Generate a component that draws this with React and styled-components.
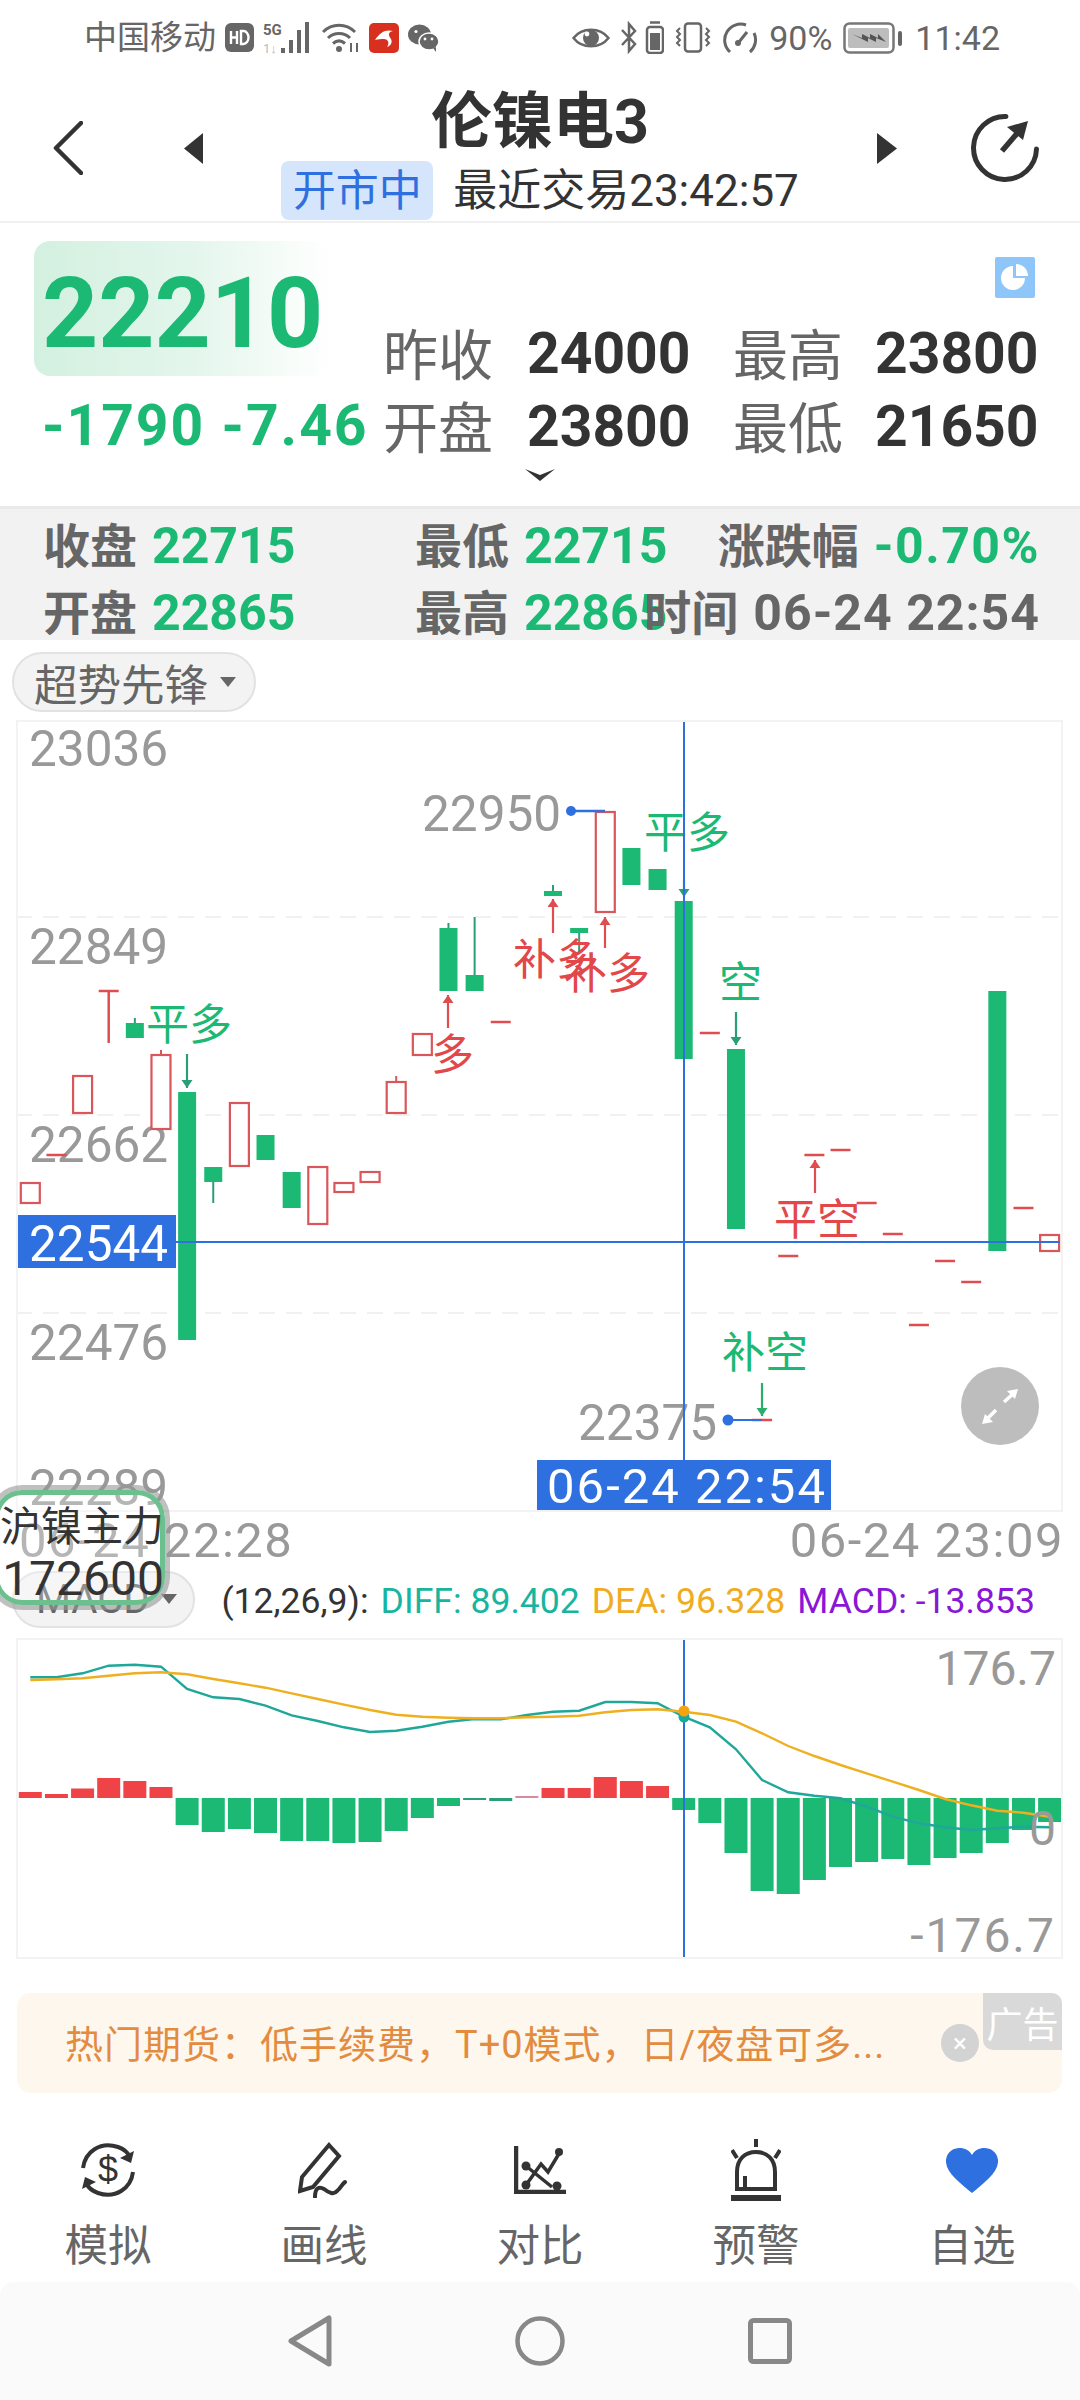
import React from 'react';
import styled, { createGlobalStyle } from 'styled-components';

const FONT = 'Roboto, "Noto Sans CJK SC", sans-serif';
const GREEN = '#1bb973';
const BLUE = '#2f70e0';

const Global = createGlobalStyle`
  html, body { margin: 0; padding: 0; background: #fff; }
  * { box-sizing: border-box; }
  body { font-family: ${FONT}; }
`;

const Page = styled.div`
  position: relative; width: 1080px; height: 2400px; overflow: hidden;
  display: flex; flex-direction: column; background: #fff; color: #333;
`;

const StatusBar = styled.div`
  height: 72px; flex: none; display: flex; justify-content: space-between; align-items: center;
  padding: 3px 80px 0 84px; color: #666;
`;
const StatusGroup = styled.div`display: flex; align-items: center; gap: ${p => p.$gap || 9}px;`;
const StatusText = styled.span`font-size: ${p => p.$size || 33}px; line-height: 40px; color: #666; white-space: nowrap; margin-left: ${p => p.$ml || 0}px;`;

const Header = styled.header`
  height: 151px; flex: none; display: grid; grid-template-columns: 1fr auto 1fr;
  border-bottom: 2px solid #f0f0f0;
`;
const HeaderSide = styled.div`
  display: flex; align-items: center; height: 70px; margin-top: 41px;
  justify-content: ${p => (p.$right ? 'flex-end' : 'flex-start')};
  padding: ${p => (p.$right ? '0 40px 0 0' : '0 0 0 53px')};
  gap: ${p => (p.$right ? 73 : 101)}px;
`;
const TitleCol = styled.div`display: flex; flex-direction: column; align-items: center; padding-top: 20px;`;
const Title = styled.h1`margin: 0; font-size: 61px; line-height: 60px; font-weight: 700; color: #333;`;
const SubRow = styled.div`display: flex; align-items: center; gap: 20px; margin-top: 9px;`;
const MarketTag = styled.span`
  width: 152px; height: 59px; display: flex; align-items: center; justify-content: center;
  background: #d5e5fb; color: ${BLUE}; border-radius: 8px; font-size: 43px; line-height: 50px;
`;
const TradeTime = styled.span`font-size: 44px; line-height: 50px; color: #333; white-space: nowrap;`;

const Quote = styled.section`height: 283px; flex: none; display: flex; flex-direction: column;`;
const QuoteTop = styled.div`display: grid; grid-template-columns: 383px 1fr; height: 239px;`;
const QuoteLeft = styled.div`padding: 18px 0 0 34px;`;
const PriceBox = styled.div`
  width: 296px; height: 135px; border-radius: 16px; padding-left: 8px;
  background: linear-gradient(90deg, #d3f0e0 0%, #e4f6ec 55%, #ffffff 100%);
  color: ${GREEN}; font-size: 98px; line-height: 146px; font-weight: 700;
`;
const ChangeLine = styled.div`
  margin: 20px 0 0 8px; font-size: 57px; line-height: 60px; font-weight: 700; color: ${GREEN};
  white-space: nowrap; letter-spacing: 2px;
`;
const QuoteRight = styled.div`padding-top: 34px;`;
const PieRow = styled.div`display: flex; justify-content: flex-end; padding-right: 45px; height: 41px;`;
const StatGrid = styled.div`
  margin-top: 19px; display: grid; grid-template-columns: 144px 206px 142px auto; grid-auto-rows: 73px; align-items: center;
`;
const StatLabel = styled.span`font-size: 55px; color: #666; line-height: 72px; white-space: nowrap; padding-top: 5px;`;
const StatValue = styled.span`font-size: 57px; font-weight: 700; color: #333; line-height: 72px;`;
const ExpandRow = styled.div`display: flex; justify-content: center; height: 26px; align-items: center;`;

const KlineInfo = styled.section`
  height: 134px; flex: none; background: #f2f2f2; border-top: 3px solid #e9e9e9;
  display: grid; grid-template-columns: 372px 303px 322px; grid-template-rows: 67px 67px;
  padding: 0 0 0 43px; align-items: center;
`;
const InfoCell = styled.div`
  display: flex; gap: 15px; align-items: baseline; white-space: nowrap;
  justify-self: ${p => (p.$end ? 'end' : 'start')};
`;
const InfoLabel = styled.span`font-size: 47px; font-weight: 700; color: #666;`;
const InfoValue = styled.span`
  font-size: 50px; font-weight: 700; color: ${p => (p.$dark ? '#666' : GREEN)};
  letter-spacing: ${p => p.$ls || 0}px;
`;

const ChipRow = styled.div`height: 80px; flex: none; padding: 12px 0 0 12px;`;
const Chip = styled.div`
  display: inline-flex; align-items: center; gap: 12px; height: ${p => p.$h}px; padding: 0 ${p => p.$pr}px 0 ${p => p.$pl}px;
  background: #f3f3f3; border: 2px solid #e2e2e2; border-radius: 30px;
  font-size: ${p => p.$size}px; color: #666; white-space: nowrap; flex: none;
`;
const ChipCaret = styled.i`
  width: 0; height: 0; border-left: 8px solid transparent; border-right: 8px solid transparent;
  border-top: 10px solid #666; display: block;
`;
const ChartFrame = styled.div`
  margin-left: 16px; width: 1047px; height: ${p => p.$h}px; flex: none; outline: 2px solid #f3f3f3; outline-offset: -2px;
  svg { display: block; }
`;
const ChartText = styled.text`
  font-family: ${FONT}; font-size: ${p => p.$size || 48}px; fill: ${p => p.$fill || '#999'};
  dominant-baseline: central; letter-spacing: ${p => p.$ls || 0}px;
`;
const AxisRow = styled.div`
  height: 56px; flex: none; display: flex; justify-content: space-between; align-items: center;
  padding: 0 16px 0 19px; font-size: 49px; color: #999; letter-spacing: 1.500px;
`;
const MacdRow = styled.div`height: 70px; flex: none; display: flex; align-items: center; padding: 0 0 8px 12px; gap: 26px;`;
const MacdParams = styled.div`display: flex; gap: 12px; font-size: 35.6px; white-space: nowrap; color: #333; margin-top: 4px;`;
const ParamVal = styled.span`color: ${p => p.$c};`;

const Ad = styled.div`
  position: relative; margin: 34px 18px 37px 17px; height: 100px; flex: none; border-radius: 14px; background: #fdf7ee;
  display: flex; align-items: center; padding: 0 0 4px 48px; color: #e38b3f; font-size: 38px; letter-spacing: 1px; white-space: nowrap;
`;
const AdClose = styled.div`
  position: absolute; left: 924px; top: 31px; width: 38px; height: 38px; border-radius: 50%;
  background: #d3d3d3; color: #fff; font-size: 26px; letter-spacing: 0; display: flex; align-items: center; justify-content: center;
`;
const AdBadge = styled.div`
  position: absolute; right: 0; top: 0; width: 79px; height: 57px; background: #d9d9d9; color: #fff;
  border-radius: 0 10px 0 10px; font-size: 36px; letter-spacing: 0; display: flex; align-items: center; justify-content: center;
`;

const TabBar = styled.nav`height: 152px; flex: none; display: grid; grid-template-columns: repeat(5, 216px);`;
const Tab = styled.div`display: flex; flex-direction: column; align-items: center; padding-top: 8px;`;
const TabIcon = styled.div`height: 64px; display: flex; align-items: center; justify-content: center;`;
const TabLabel = styled.span`margin-top: 21px; font-size: 43.5px; line-height: 48px; color: #666;`;

const NavBar = styled.div`
  flex: 1; background: #fafafa; border-radius: 14px 14px 0 0; display: flex; justify-content: center; align-items: center;
`;
const NavSlot = styled.div`width: 230px; height: 60px; display: flex; align-items: center; justify-content: center;`;

const FloatWidget = styled.div`
  position: absolute; left: -6px; top: 1490px; width: 171px; height: 115px; border-radius: 28px;
  border: 5px solid #6cc08e; box-shadow: 0 0 0 5px rgba(150,150,150,.6);
  background: rgba(255,255,255,.28); display: flex; flex-direction: column; align-items: flex-end;
  color: #333; white-space: nowrap;
`;
const FloatName = styled.span`font-size: 41px; line-height: 52px; margin: 6px -4px 0 0;`;
const FloatValue = styled.span`font-size: 48px; line-height: 52px; margin-right: -4px;`;

/* ---------- icons ---------- */
const HdIcon = () => (
  <svg width="29" height="29" viewBox="0 0 29 29"><rect width="29" height="29" rx="6" fill="#666"/>
    <path d="M6 8v13M6 14.500h6M12 8v13" stroke="#fff" strokeWidth="2.400" fill="none"/>
    <path d="M16 8v13h2.500a5 6.500 0 0 0 0-13z" stroke="#fff" strokeWidth="2.400" fill="none"/></svg>
);
const SignalIcon = () => (
  <svg width="50" height="32" viewBox="0 0 50 32">
    <text x="0" y="13" fontSize="15" fontFamily="Roboto" fontWeight="700" fill="#666">5G</text>
    <text x="0" y="31" fontSize="13" fontFamily="Roboto" fill="#bbb">1↓</text>
    <g fill="#666"><rect x="18" y="26" width="4" height="5"/><rect x="26" y="18" width="4" height="13"/><rect x="34" y="8" width="4" height="23"/><rect x="42" y="0" width="4" height="31"/></g>
  </svg>
);
const WifiIcon = () => (
  <svg width="38" height="30" viewBox="0 0 38 30" fill="none" stroke="#666" strokeWidth="3">
    <path d="M1 9C10 0 24 0 33 9M6 15c6-6 16-6 22 0M11 20.500c4-3.500 8-3.500 12 0"/>
    <circle cx="17" cy="26" r="3" fill="#666" stroke="none"/><path d="M29 20v9M35 20v9" strokeWidth="2"/></svg>
);
const AppIcon = () => (
  <svg width="30" height="30" viewBox="0 0 30 30"><rect width="30" height="30" rx="5" fill="#d8301f"/>
    <path d="M6 17C11 9 17 6 24 8c-5 1-5 4-2 8 2 4-1 7-4 8 3-4 1-8-3-8-3 0-6 0-9 1z" fill="#fff"/></svg>
);
const WechatIcon = () => (
  <svg width="31" height="28" viewBox="0 0 31 28"><ellipse cx="11.500" cy="10.500" rx="11.500" ry="10" fill="#666"/>
    <ellipse cx="21" cy="17.500" rx="10" ry="8.500" fill="#666" stroke="#fff" strokeWidth="1.500"/>
    <circle cx="8" cy="7.500" r="1.600" fill="#fff"/><circle cx="17" cy="15" r="1.400" fill="#fff"/><circle cx="24" cy="15" r="1.400" fill="#fff"/><path d="M25 24l3 4v-5z" fill="#666"/></svg>
);
const EyeIcon = () => (
  <svg width="38" height="24" viewBox="0 0 38 24"><path d="M1.500 12C10 1 28 1 36.500 12 28 23 10 23 1.500 12z" fill="none" stroke="#666" strokeWidth="2.500"/>
    <circle cx="19" cy="12" r="8" fill="#666"/><circle cx="15" cy="8" r="2.400" fill="#fff"/></svg>
);
const BtBatteryIcon = () => (
  <svg width="43" height="33" viewBox="0 0 43 33" fill="none" stroke="#666" strokeWidth="2.500">
    <path d="M1 9l13 14-6 7V3l6 7L1 24"/><rect x="26" y="6" width="16" height="26" rx="3"/><path d="M29 1.500h10"/>
    <rect x="29" y="12" width="10" height="17" fill="#666" stroke="none"/></svg>
);
const VibrateIcon = () => (
  <svg width="36" height="31" viewBox="0 0 36 31" fill="none" stroke="#666" strokeWidth="2.500">
    <rect x="10" y="1.500" width="16" height="28" rx="3"/><path d="M5 6l-3 3 3 3-3 3 3 3-3 3 3 3M31 6l3 3-3 3 3 3-3 3 3 3-3 3" strokeWidth="2"/></svg>
);
const GaugeIcon = () => (
  <svg width="36" height="32" viewBox="0 0 36 32" fill="none" stroke="#666" strokeWidth="3">
    <path d="M8 30A16 16 0 0 1 24 3M32 11a16 16 0 0 1-4 19"/><path d="M25 10l-8 10" strokeWidth="3"/><circle cx="16" cy="21" r="3" fill="#666" stroke="none"/></svg>
);
const BatteryIcon = () => (
  <svg width="59" height="32" viewBox="0 0 59 32">
    <rect x="1.500" y="1.500" width="49" height="29" rx="5" fill="none" stroke="#777" strokeWidth="2.500"/>
    <rect x="5" y="6" width="41" height="20" rx="2" fill="#bdbdbd"/><rect x="55" y="9" width="4" height="15" rx="2" fill="#666"/>
    <path d="M9 12l10 4 0-4 8 4 0-4 8 4 0-4 8 8-10-4 0 4-8-4 0 4-8-4z" fill="#555"/></svg>
);
const ChevronLeft = () => (
  <svg width="30" height="54" viewBox="0 0 30 54"><path d="M28 2L3 27l25 25" fill="none" stroke="#333" strokeWidth="4.500" strokeLinecap="round" strokeLinejoin="round"/></svg>
);
const TriLeft = () => <svg width="19" height="31" viewBox="0 0 19 31"><path d="M19 0v31L0 15.500z" fill="#333"/></svg>;
const TriRight = () => <svg width="20" height="31" viewBox="0 0 20 31"><path d="M0 0v31l20-15.500z" fill="#333"/></svg>;
const TimerIcon = () => (
  <svg width="70" height="70" viewBox="0 0 70 70" fill="none">
    <path d="M36 3.500A31.500 31.500 0 1 0 66.500 36" stroke="#333" strokeWidth="5" strokeLinecap="round"/>
    <path d="M32 38l18-21" stroke="#333" strokeWidth="5.500"/><path d="M58 8l-21 6 16 13z" fill="#333"/></svg>
);
const PieIcon = () => (
  <svg width="40" height="41" viewBox="0 0 40 41"><rect width="40" height="41" rx="2" fill="#8fc6fa"/>
    <path d="M18 9a12 12 0 1 0 12 12H18z" fill="#fff"/><path d="M21 7a12 12 0 0 1 12 12H21z" fill="#fff"/></svg>
);
const SmallChevron = () => <svg width="32" height="14" viewBox="0 0 32 14"><path d="M1 1l15 12L31 1l-15 6z" fill="#333"/></svg>;

const SwapDollar = () => (
  <svg width="56" height="56" viewBox="0 0 56 56" fill="none" stroke="#333" strokeWidth="4">
    <path d="M3 26C5 10 20-1 38 5c6 2 10 6 12 10"/><path d="M53 30C51 46 36 57 18 51c-6-2-10-6-12-10"/>
    <path d="M54 9l-3 12-11-5z" fill="#333" stroke="none"/><path d="M2 47l3-12 11 5z" fill="#333" stroke="none"/>
    <text x="28" y="40" textAnchor="middle" fontFamily="Liberation Sans" fontSize="36" fill="#333" stroke="none">$</text></svg>
);
const PenIcon = () => (
  <svg width="52" height="56" viewBox="0 0 52 56" fill="none" stroke="#333" strokeWidth="4">
    <path d="M31 3l10 11-26 31-13 4 2-14z" strokeLinejoin="miter"/>
    <path d="M17 55c0-9 4-11 9-8 5 4 10 6 13 2 4-3 5-7 8-9" strokeLinecap="round"/></svg>
);
const CompareIcon = () => (
  <svg width="52" height="48" viewBox="0 0 52 48" fill="none" stroke="#333">
    <path d="M2 0v46h50" strokeWidth="4.500"/>
    <path d="M12 20l26 21M12 39l15-21 7 8 12-20" strokeWidth="3.500"/>
    <g fill="#333" stroke="none"><circle cx="12" cy="20" r="4.500"/><circle cx="12" cy="39" r="4.500"/><circle cx="45" cy="6" r="4"/><circle cx="43" cy="40" r="4.500"/></g></svg>
);
const AlarmIcon = () => (
  <svg width="50" height="62" viewBox="0 0 50 62" fill="none" stroke="#333" strokeWidth="4">
    <path d="M6 50V33C6 20 14 13 25 13s19 7 19 20v17z"/><path d="M14 50V37" />
    <path d="M25 0v8M1 11l5 8M49 11l-5 8" strokeWidth="4"/><rect x="0" y="56" width="50" height="6" fill="#333" stroke="none"/></svg>
);
const HeartIcon = () => (
  <svg width="52" height="46" viewBox="0 0 52 46"><path d="M26 8C21-2 2-2 0 13c-1 12 14 23 26 33C38 36 53 25 52 13 50-2 31-2 26 8z" fill={BLUE}/></svg>
);

/* ---------- chart ---------- */
const X = i => 30.3 + 26.136 * i;
const candles = [
  [0, 'r', 1182, 1203], [1, 'd', 1155], [2, 'r', 1075, 1113], [3, 'd', 991, 0, 0, 1043],
  [4, 'g', 1023, 1038, 1018], [5, 'r', 1054, 1129, 1050], [6, 'g', 1092, 1340], [7, 'g', 1167, 1182, 0, 1203],
  [8, 'r', 1102, 1166], [9, 'g', 1135, 1160], [10, 'g', 1172, 1208], [11, 'r', 1166, 1224],
  [12, 'r', 1182, 1192], [13, 'r', 1171, 1182], [14, 'r', 1081, 1113, 1076], [15, 'r', 1033, 1055],
  [16, 'g', 928, 991, 923], [17, 'g', 975, 991, 917], [18, 'd', 1022],
  [20, 'g', 891, 896, 885], [21, 'g', 928, 933, 0, 952], [22, 'r', 811, 912], [23, 'g', 848, 885], [24, 'g', 869, 890],
  [25, 'g', 901, 1059], [26, 'd', 1033], [27, 'g', 1049, 1229], [28, 'd', 1420], [29, 'd', 1256],
  [30, 'd', 1155], [31, 'd', 1150], [32, 'd', 1203], [33, 'd', 1234], [34, 'd', 1325], [35, 'd', 1261], [36, 'd', 1282],
  [37, 'g', 991, 1251], [38, 'd', 1208], [39, 'r', 1234, 1251],
];

const Candle = ({ c: [i, type, top, bottom, wickTop, wickBot] }) => {
  const x = X(i);
  if (type === 'd') {
    return (
      <g stroke="#df4d50" strokeWidth="2.500">
        <line x1={x - 10} x2={x + 10} y1={top} y2={top} />
        {wickBot ? <line x1={x} x2={x} y1={top} y2={wickBot} /> : null}
      </g>
    );
  }
  const color = type === 'g' ? GREEN : '#d9565b';
  return (
    <g>
      {wickTop ? <line x1={x} x2={x} y1={wickTop} y2={top} stroke={type === 'g' ? '#2a9e74' : color} strokeWidth="2" /> : null}
      {wickBot ? <line x1={x} x2={x} y1={bottom} y2={wickBot} stroke={type === 'g' ? '#2a9e74' : color} strokeWidth="2" /> : null}
      {type === 'g'
        ? <rect x={x - 9} y={top} width="18" height={bottom - top} fill={GREEN} />
        : <rect x={x - 9.500} y={top + 1} width="19" height={bottom - top - 1} fill="#fff" stroke={color} strokeWidth="2.200" />}
    </g>
  );
};

const Arrow = ({ x, from, to, color }) => {
  const d = to > from ? -1 : 1;
  return (
    <g>
      <line x1={x} x2={x} y1={from} y2={to} stroke={color} strokeWidth="2.200" />
      <path d={`M${x} ${to}l-5.500 ${d * 8}h11z`} fill={color} />
    </g>
  );
};

const MainChart = () => (
  <svg width="1047" height="792" viewBox="16 720 1047 792">
    {[917, 1115, 1313].map(y => (
      <line key={y} x1="16" x2="1063" y1={y} y2={y} stroke="#f1f1f1" strokeWidth="2" strokeDasharray="16 11" />
    ))}
    <ChartText x="29" y="749" $size={49.5}>23036</ChartText>
    <ChartText x="29" y="947" $size={49.5}>22849</ChartText>
    <ChartText x="29" y="1145" $size={49.5}>22662</ChartText>
    <ChartText x="29" y="1343" $size={49.5}>22476</ChartText>
    <ChartText x="29" y="1488" $size={49.5}>22289</ChartText>
    {candles.map(c => <Candle key={c[0]} c={c} />)}

    <ChartText x="422" y="814" $size={49.5}>22950</ChartText>
    <ChartText x="578" y="1423" $size={49.5}>22375</ChartText>
    <line x1="571" x2="605" y1="811" y2="811" stroke={BLUE} strokeWidth="2.500" />
    <circle cx="571" cy="811" r="5" fill={BLUE} />
    <line x1="728" x2="762" y1="1420" y2="1420" stroke={BLUE} strokeWidth="2" />
    <circle cx="728" cy="1420" r="5.500" fill={BLUE} />

    <Arrow x={187} from={1054} to={1088} color="#2a9e74" />
    <Arrow x={448} from={1028} to={995} color="#df4d50" />
    <Arrow x={553} from={933} to={899} color="#df4d50" />
    <Arrow x={605} from={948} to={917} color="#df4d50" />
    <Arrow x={684} from={880} to={897} color="#2a9e74" />
    <Arrow x={736} from={1012} to={1045} color="#2a9e74" />
    <Arrow x={762} from={1383} to={1416} color="#2aae6c" />
    <Arrow x={815} from={1193} to={1160} color="#df4d50" />

    <ChartText x="146" y="1025" $size={43} $fill={GREEN}>平多</ChartText>
    <ChartText x="431" y="1055" $size={43} $fill="#e2474a">多</ChartText>
    <ChartText x="513" y="960" $size={43} $fill="#e2474a">补多</ChartText>
    <ChartText x="564" y="974" $size={43} $fill="#e2474a">补多</ChartText>
    <ChartText x="644" y="833" $size={43} $fill={GREEN}>平多</ChartText>
    <ChartText x="719" y="983" $size={43} $fill={GREEN}>空</ChartText>
    <ChartText x="774" y="1220" $size={43} $fill="#e2474a">平空</ChartText>
    <ChartText x="722" y="1353" $size={43} $fill={GREEN}>补空</ChartText>

    <line x1="176" x2="1060" y1="1242" y2="1242" stroke={BLUE} strokeWidth="2" />
    <line x1="684" x2="684" y1="720" y2="1460" stroke={BLUE} strokeWidth="2" />
    <rect x="17" y="1215" width="159" height="53" fill={BLUE} />
    <ChartText x="29" y="1244" $size={49.5} $fill="#fff">22544</ChartText>
    <rect x="537" y="1460" width="294" height="52" fill={BLUE} />
    <ChartText x="687" y="1486" $size={49} $ls={2} $fill="#fff" textAnchor="middle">06-24 22:54</ChartText>

    <circle cx="1000" cy="1406" r="39" fill="#bdbdbd" />
    <path d="M1004 1402l10-9M996 1410l-10 10" fill="none" stroke="#fff" strokeWidth="3.500" />
    <path d="M1018 1389l-11 2 8 8zM982 1424l11-2-8-8z" fill="#fff" />
  </svg>
);

const macdBars = [6, 4, 9.500, 20, 17, 11, -27, -34, -31, -35, -43, -43, -45, -44, -33, -20, -8, -2, -3, 2,
  10, 10, 21, 17, 12, -12, -25, -55, -93, -96, -82, -69, -64, -61, -67, -60, -55, -45, -32, -24];
const diff = [172, 172, 160, 137, 134, 140, 207, 232, 237, 257, 286, 303, 322, 336, 332, 320, 305, 297, 298, 285,
  275, 272, 246, 246, 250, 290, 322, 388, 480, 517, 527, 535, 560, 590, 610, 622, 630, 625, 620, 622];
const dea = [180, 178, 175, 167, 160, 157, 163, 177, 190, 203, 220, 237, 254, 270, 284, 290, 293, 295, 295, 292,
  290, 287, 277, 270, 268, 275, 285, 305, 340, 378, 408, 435, 460, 485, 510, 537, 556, 572, 578, 590];
const pts = arr => arr.map((v, i) => `${X(i).toFixed(1)},${(1620 + v / 3).toFixed(1)}`).join(' ');
const barColor = v => (Math.abs(v) <= 3 ? (v > 0 ? '#d98aa0' : '#2a9e74') : v > 0 ? '#f04347' : GREEN);

const MacdChart = () => (
  <svg width="1047" height="321" viewBox="16 1638 1047 321">
    {macdBars.map((v, i) => (
      <rect key={i} x={X(i) - 11.500} y={v > 0 ? 1798 - v : 1798} width="23" height={Math.abs(v)} fill={barColor(v)} />
    ))}
    <polyline points={pts(diff)} fill="none" stroke="#1fa79a" strokeWidth="2.400" />
    <polyline points={pts(dea)} fill="none" stroke="#eeb020" strokeWidth="2.400" />
    <line x1="684" x2="684" y1="1638" y2="1959" stroke={BLUE} strokeWidth="2" />
    <circle cx="684" cy="1717" r="5.500" fill="#17a99c" />
    <circle cx="684" cy="1711" r="5.500" fill="#f5a30e" />
    <ChartText x="1056" y="1668" textAnchor="end">176.7</ChartText>
    <ChartText x="1056" y="1828" textAnchor="end">0</ChartText>
    <ChartText x="1056" y="1935" $ls={2} textAnchor="end">-176.7</ChartText>
  </svg>
);

const tabs = [
  ['模拟', <SwapDollar key="a" />], ['画线', <PenIcon key="b" />], ['对比', <CompareIcon key="c" />],
  ['预警', <AlarmIcon key="d" />], ['自选', <HeartIcon key="e" />],
];

export default function App() {
  return (
    <Page>
      <Global />
      <StatusBar>
        <StatusGroup>
          <StatusText>中国移动</StatusText>
          <HdIcon /><SignalIcon /><WifiIcon /><AppIcon /><WechatIcon />
        </StatusGroup>
        <StatusGroup $gap={11}>
          <EyeIcon /><BtBatteryIcon /><VibrateIcon /><GaugeIcon />
          <StatusText $size={34}>90%</StatusText>
          <BatteryIcon />
          <StatusText $size={34} $ml={2}>11:42</StatusText>
        </StatusGroup>
      </StatusBar>

      <Header>
        <HeaderSide><ChevronLeft /><TriLeft /></HeaderSide>
        <TitleCol>
          <Title>伦镍电3</Title>
          <SubRow><MarketTag>开市中</MarketTag><TradeTime>最近交易23:42:57</TradeTime></SubRow>
        </TitleCol>
        <HeaderSide $right><TriRight /><TimerIcon /></HeaderSide>
      </Header>

      <Quote>
        <QuoteTop>
          <QuoteLeft>
            <PriceBox>22210</PriceBox>
            <ChangeLine>-1790 -7.46</ChangeLine>
          </QuoteLeft>
          <QuoteRight>
            <PieRow><PieIcon /></PieRow>
            <StatGrid>
              <StatLabel>昨收</StatLabel><StatValue>24000</StatValue>
              <StatLabel>最高</StatLabel><StatValue>23800</StatValue>
              <StatLabel>开盘</StatLabel><StatValue>23800</StatValue>
              <StatLabel>最低</StatLabel><StatValue>21650</StatValue>
            </StatGrid>
          </QuoteRight>
        </QuoteTop>
        <ExpandRow><SmallChevron /></ExpandRow>
      </Quote>

      <KlineInfo>
        <InfoCell><InfoLabel>收盘</InfoLabel><InfoValue>22715</InfoValue></InfoCell>
        <InfoCell><InfoLabel>最低</InfoLabel><InfoValue>22715</InfoValue></InfoCell>
        <InfoCell $end><InfoLabel>涨跌幅</InfoLabel><InfoValue $ls={1.5}>-0.70%</InfoValue></InfoCell>
        <InfoCell><InfoLabel>开盘</InfoLabel><InfoValue>22865</InfoValue></InfoCell>
        <InfoCell><InfoLabel>最高</InfoLabel><InfoValue>22865</InfoValue></InfoCell>
        <InfoCell $end><InfoLabel>时间</InfoLabel><InfoValue $dark $ls={1}>06-24 22:54</InfoValue></InfoCell>
      </KlineInfo>

      <ChipRow>
        <Chip $h={60} $pl={20} $pr={18} $size={43.5}>超势先锋<ChipCaret /></Chip>
      </ChipRow>
      <ChartFrame $h={792}><MainChart /></ChartFrame>
      <AxisRow><span>06-24 22:28</span><span>06-24 23:09</span></AxisRow>
      <MacdRow>
        <Chip $h={57} $pl={22} $pr={16} $size={40}>MACD<ChipCaret /></Chip>
        <MacdParams>
          <span>(12,26,9):</span>
          <ParamVal $c="#17b5a0">DIFF: 89.402</ParamVal>
          <ParamVal $c="#f0ac1e">DEA: 96.328</ParamVal>
          <ParamVal $c="#8a16d6">MACD: -13.853</ParamVal>
        </MacdParams>
      </MacdRow>
      <ChartFrame $h={321}><MacdChart /></ChartFrame>

      <Ad>
        热门期货：低手续费，T+0模式，日/夜盘可多...
        <AdClose>×</AdClose>
        <AdBadge>广告</AdBadge>
      </Ad>

      <TabBar>
        {tabs.map(([label, icon]) => (
          <Tab key={label}><TabIcon>{icon}</TabIcon><TabLabel>{label}</TabLabel></Tab>
        ))}
      </TabBar>

      <NavBar>
        <NavSlot>
          <svg width="46" height="52" viewBox="0 0 46 52"><path d="M42 3v46L4 26z" fill="none" stroke="#888" strokeWidth="5" strokeLinejoin="round" /></svg>
        </NavSlot>
        <NavSlot>
          <svg width="50" height="50" viewBox="0 0 50 50"><circle cx="25" cy="25" r="22.500" fill="none" stroke="#888" strokeWidth="4.500" /></svg>
        </NavSlot>
        <NavSlot>
          <svg width="44" height="46" viewBox="0 0 44 46"><rect x="2.500" y="2.500" width="39" height="41" rx="3" fill="none" stroke="#888" strokeWidth="5" /></svg>
        </NavSlot>
      </NavBar>

      <FloatWidget>
        <FloatName>沪镍主力</FloatName>
        <FloatValue>172600</FloatValue>
      </FloatWidget>
    </Page>
  );
}
